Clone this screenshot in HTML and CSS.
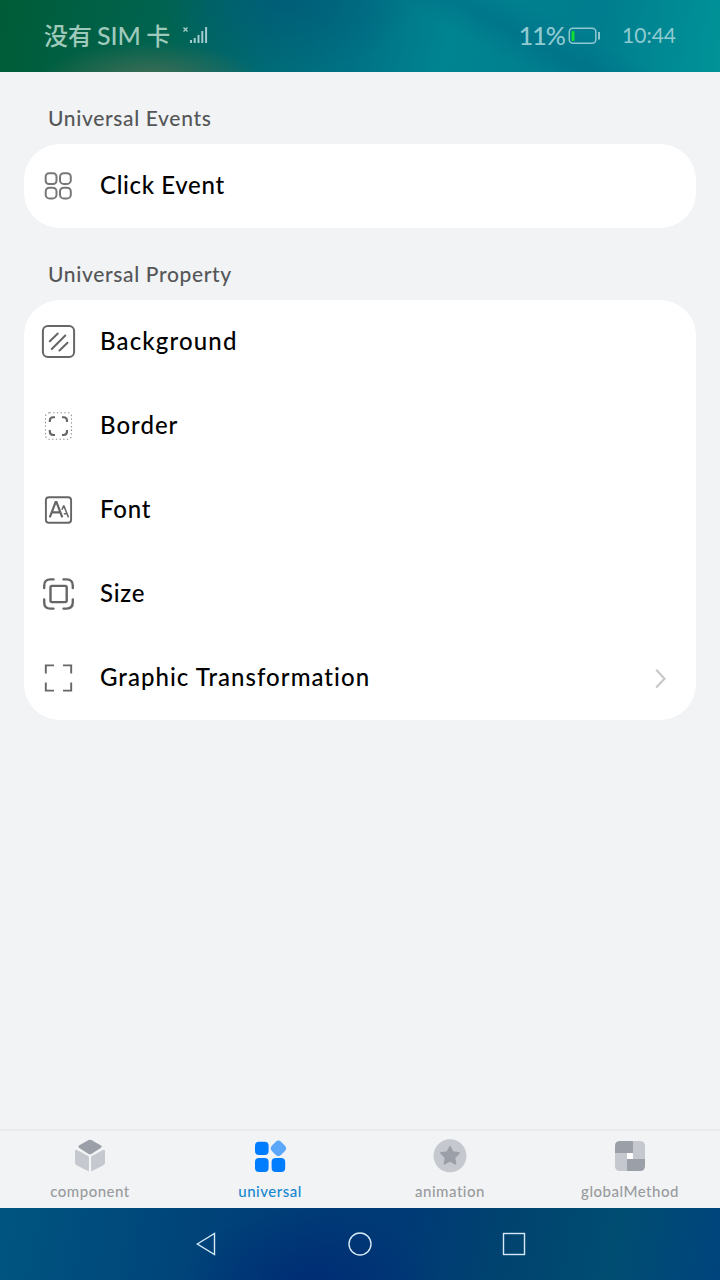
FILE: index.html
```html
<!DOCTYPE html>
<html lang="en">
<head>
<meta charset="utf-8">
<title>Universal</title>
<link rel="stylesheet" href="styles.css">
</head>
<body>
<div class="screen">
  <header class="status">
    <span class="sim">没有 <span class="sim-latin">SIM</span> 卡</span>
    <svg class="signal" width="28" height="20" viewBox="0 0 28 20"><path d="M1.500 1.500l4 4M5.500 1.500l-4 4" stroke="#a9cfc6" stroke-width="1.300"/><path d="M9 14v3M12.700 12v5M16.500 9v8M20.300 5v12M24.100 1v16" stroke="#a4ccce" stroke-width="2"/></svg>
    <span class="percent">11%</span>
    <svg class="battery" width="34" height="18" viewBox="0 0 34 18"><rect x="1.300" y="1.300" width="26.500" height="15" rx="3.500" fill="none" stroke="#8fc8d1" stroke-width="1.500"/><rect x="3.500" y="4" width="3" height="10" rx="1" fill="#12dc35"/><path d="M31 5v7.500" stroke="#8fc8d1" stroke-width="2"/></svg>
    <span class="clock">10:44</span>
  </header>

  <main class="content">
    <h2 class="heading">Universal Events</h2>
    <ul class="card">
      <li class="row">
        <svg class="icon" viewBox="0 0 36 36"><g stroke-width="2" stroke="#777"><rect x="5.700" y="5.200" width="10.800" height="10.800" rx="3.300"/><rect x="20" y="5.200" width="10.800" height="10.800" rx="3.800"/><rect x="5.700" y="19.700" width="10.800" height="10.800" rx="3.800"/><rect x="20" y="19.700" width="10.800" height="10.800" rx="3.800"/></g></svg>
        <span class="label click">Click Event</span>
      </li>
    </ul>

    <h2 class="heading">Universal Property</h2>
    <ul class="card">
      <li class="row">
        <svg class="icon" viewBox="0 0 36 36"><rect x="2.900" y="1.900" width="31.200" height="31.200" rx="5" stroke-width="2"/><path d="M9.800 17.300l8-7.800M11.800 25l13.500-13.500M19.500 26.500l8-7.800" stroke-width="2" stroke-linecap="round"/></svg>
        <span class="label background">Background</span>
      </li>
      <li class="row">
        <svg class="icon" viewBox="0 0 36 36"><rect x="5.500" y="4.700" width="26" height="26.600" rx="4" stroke="#888" stroke-width="1.100" stroke-dasharray="1.300 2.400"/><path d="M9.800 14v-1.300q0-3.500 3.500-3.500H15M22 9.200h1.500q3.500 0 3.500 3.500V14M27 22v1.500q0 3.500-3.500 3.500H22M15 27h-1.700q-3.500 0-3.500-3.500V22" stroke-width="2.100"/></svg>
        <span class="label border">Border</span>
      </li>
      <li class="row">
        <svg class="icon" viewBox="0 0 36 36"><rect x="5.900" y="5.300" width="25.200" height="25.400" rx="3" stroke-width="1.900"/><path d="M9.800 25.400l5.800-15.200h.9l5.800 15.200M12 20.300h8.200" stroke-width="2.200"/><path d="M21.900 17.800l1.600-3.700h.5l4.500 11.300M23.800 21.700h3.300" stroke-width="1.500"/></svg>
        <span class="label short">Font</span>
      </li>
      <li class="row">
        <svg class="icon" viewBox="0 0 36 36"><rect x="10.500" y="9.900" width="16.200" height="16.200" rx="1.500" stroke-width="2.400"/><path d="M4.200 12V9.700q0-6.300 6.300-6.300h3M23.500 3.400h3q6.300 0 6.300 6.300V12M32.800 23.500v2.800q0 6.300-6.300 6.300h-3M13.500 32.600h-3q-6.300 0-6.300-6.300v-2.800" stroke-width="2.400" stroke-linecap="round"/></svg>
        <span class="label short">Size</span>
      </li>
      <li class="row">
        <svg class="icon" viewBox="0 0 36 36"><path d="M5.800 13.500V5.400H14M23 5.400h8.200v8.100M31.200 22.500v8.100H23M14 30.600H5.800v-8.100" stroke-width="1.900"/></svg>
        <span class="label graphic">Graphic Transformation</span>
        <svg class="chevron" width="12" height="22" viewBox="0 0 12 22"><path d="M1.200 2.800l8.300 8.900-8.300 8.900" fill="none" stroke="#c9c9c9" stroke-width="2.200"/></svg>
      </li>
    </ul>
  </main>

  <nav class="tabs">
    <div class="tab">
      <svg class="tab-icon" viewBox="0 0 36 36"><path d="M16.600 2q1.400-.7 2.800 0l9.600 5.600q1.400 1.100 0 2.200l-9.600 6.200q-1.400.7-2.800 0L7 9.800q-1.400-1.100 0-2.200z" fill="#9b9fa7"/><path d="M5 12L16 18q.9.600.9 1.600v12.900q0 1-1 .5L4.600 27.200Q3 26.300 3 24.600V13.200q0-2 2-1.200zM31 12L20 18q-.9.600-.9 1.600v12.900q0 1 1 .5l11.300-5.800Q33 26.300 33 24.600V13.200q0-2-2-1.200z" fill="#c5c8ce"/></svg>
      <span class="tab-label">component</span>
    </div>
    <div class="tab active">
      <svg class="tab-icon" viewBox="0 0 36 36"><g fill="#007dff"><rect x="3" y="3.800" width="13.600" height="13.300" rx="4"/><rect x="3" y="20" width="13.600" height="14" rx="4"/><rect x="19.600" y="20" width="13.600" height="14" rx="4"/></g><rect x="19.900" y="3.900" width="13" height="13" rx="4" fill="#5ba7fa" transform="rotate(45 26.400 10.400)"/></svg>
      <span class="tab-label">universal</span>
    </div>
    <div class="tab">
      <svg class="tab-icon" viewBox="0 0 36 36"><circle cx="18" cy="17.800" r="16.500" fill="#c5c8ce"/><path d="M18 8.800l2.700 5.400 6.200.8-4.600 4.500 1.200 6.300-5.500-3-5.500 3 1.200-6.300-4.600-4.500 6.200-.8z" fill="#9b9fa7" stroke="#9b9fa7" stroke-width="1.800" stroke-linejoin="round"/></svg>
      <span class="tab-label">animation</span>
    </div>
    <div class="tab">
      <svg class="tab-icon" viewBox="0 0 36 36"><path d="M3 15V8q0-5 5-5h13v12z" fill="#9b9fa7"/><path d="M21 3h7q5 0 5 5v13H21z" fill="#c5c8ce"/><path d="M33 21v7q0 5-5 5H15V21z" fill="#9b9fa7"/><path d="M15 33H8q-5 0-5-5V15h12z" fill="#c5c8ce"/><rect x="15" y="15" width="6" height="6" fill="#fff"/></svg>
      <span class="tab-label">globalMethod</span>
    </div>
  </nav>

  <footer class="system">
    <svg width="26" height="26" viewBox="0 0 26 26"><path d="M4.300 13l17.200-10.500v21z"/></svg>
    <svg width="26" height="26" viewBox="0 0 26 26"><circle cx="13" cy="13" r="11"/></svg>
    <svg width="26" height="26" viewBox="0 0 26 26"><rect x="2.500" y="2.500" width="21" height="21"/></svg>
  </footer>
</div>
</body>
</html>
```
FILE: styles.css
```css
* { box-sizing: border-box; }
body { margin: 0; background: #f1f3f5; font-family: Lato, "Noto Sans CJK SC", sans-serif; font-variant-ligatures: none; }
.screen { width: 720px; height: 1280px; display: flex; flex-direction: column; background: #f1f3f5; }
.status {
  height: 72px; flex: none; display: flex; align-items: center; padding: 0 44px 2px;
  white-space: nowrap;
  background:
    radial-gradient(ellipse 110px 38px at 150px 80px, rgba(85, 112, 88, .8), transparent),
    radial-gradient(ellipse 130px 75px at 285px 0, rgba(0, 88, 120, .7), transparent),
    linear-gradient(28deg, transparent 62%, rgba(0, 106, 133, .5) 69%, transparent 77%),
    linear-gradient(100deg, #005c37 0%, #006451 24%, #006b76 38%, #007286 50%, #008491 62%, #007d8e 82%, #009398 100%);
}
.sim { font: 500 24px/34px "Noto Sans CJK SC", sans-serif; letter-spacing: -.1px; color: #9fcabb; }
.sim-latin { font-family: Lato, sans-serif; font-size: 25px; font-weight: 500; }
.signal { margin: 2px auto 0 12px; }
.percent { font-size: 25px; line-height: 36px; letter-spacing: -1px; font-weight: 500; color: #91cbd2; }
.battery { margin: 2px 20px 0 3px; }
.clock { font-size: 21px; line-height: 36px; color: #91cbd2; }

.content { flex: 1; padding: 24px 24px 0; }
.heading { margin: 0; padding: 0 24px; height: 48px; font-size: 21px; line-height: 44px; font-weight: 500; letter-spacing: .65px; color: #555658; }
.card { list-style: none; margin: 0 0 24px; padding: 0; background: #fff; border-radius: 36px; }
.row { height: 84px; padding: 0 29px 0 16px; display: flex; align-items: center; gap: 24px; }
.icon { width: 36px; height: 36px; flex: none; fill: none; stroke: #666; }
.label { font-size: 24px; line-height: 36px; padding-bottom: 2px; font-weight: 500; color: #000; white-space: nowrap; }
.click { letter-spacing: .65px; }
.background { letter-spacing: 1.15px; }
.border { letter-spacing: 1px; }
.short { letter-spacing: .75px; }
.graphic { letter-spacing: 1.03px; }
.chevron { margin-left: auto; }

.tabs { height: 79px; flex: none; display: grid; grid-template-columns: repeat(4, 1fr); border-top: 2px solid #e7e9eb; }
.tab { display: flex; flex-direction: column; align-items: center; padding-top: 7px; color: #999b9d; }
.tab-icon { width: 36px; height: 36px; }
.tab-label { font-size: 15px; line-height: 20px; margin-top: 7px; font-weight: 500; letter-spacing: .5px; }
.active { color: #1687cf; }

.system {
  height: 72px; flex: none; display: flex; justify-content: center; align-items: center; gap: 128px;
  background:
    radial-gradient(ellipse 130px 80px at 310px 80px, rgba(0, 42, 116, .9), transparent),
    linear-gradient(100deg, #005580 0%, #00457a 25%, #003a76 45%, #003a76 56%, #00436f 70%, #004d72 85%, #00447d 100%);
}
.system svg { fill: none; stroke: #d5e9f7; stroke-width: 1.4; }
```
